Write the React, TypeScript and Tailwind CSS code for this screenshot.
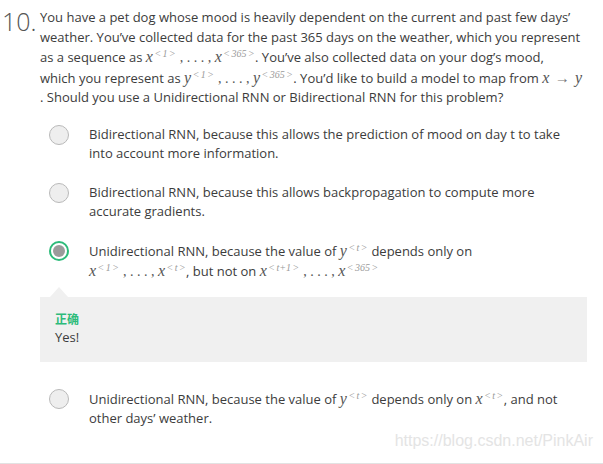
import React from "react";

function V({ c }: { c: string }) {
  return <span className="font-['Liberation_Serif'] text-[16px] italic text-[#555]">{c}</span>;
}

function Sup({ c }: { c: string }) {
  return (
    <sup className="ml-[2px] mr-[1px] font-['Liberation_Serif'] text-[10px] not-italic text-[#9a9a9a]">
      <span>&lt;</span>
      <span className="mx-[2px] italic">{c}</span>
      <span>&gt;</span>
    </sup>
  );
}

function Seq({ v, a, b }: { v: string; a: string; b: string }) {
  return (
    <span className="whitespace-nowrap">
      <V c={v} />
      <Sup c={a} />
      <span className="font-['Liberation_Serif'] text-[14px] text-[#555]"> , . . . , </span>
      <V c={v} />
      <Sup c={b} />
    </span>
  );
}

function Radio({ checked }: { checked?: boolean }) {
  if (checked) {
    return (
      <span className="flex h-[20px] w-[20px] shrink-0 items-center justify-center rounded-full border-[2.5px] border-[#2dbb7a] bg-white">
        <span className="block h-[12px] w-[12px] rounded-full bg-[#9b9b9b]" />
      </span>
    );
  }
  return <span className="block h-[20px] w-[20px] shrink-0 rounded-full border border-[#b9b9b9] bg-[#eeeeee]" />;
}

function Option({ checked, children }: { checked?: boolean; children: React.ReactNode }) {
  return (
    <div className="flex items-start pl-[49px]">
      <Radio checked={checked} />
      <div className="ml-[20px] w-[490px] leading-[19px]">{children}</div>
    </div>
  );
}

export default function App() {
  return (
    <div className="relative h-[464px] w-[603px] overflow-hidden border-b border-[#e2e2e2] bg-white font-['Open_Sans'] text-[13px] text-[#3c3c3c]">
      <div className="flex items-start pt-[8px]">
        <div className="w-[40px] pl-[2px] text-[25px] font-light leading-[26px] text-[#555]">10.</div>
        <p className="w-[553px] leading-[19.5px]">
          You have a pet dog whose mood is heavily dependent on the current and past few days’ weather. You’ve collected
          data for the past 365 days on the weather, which you represent as a sequence as <Seq v="x" a="1" b="365" />.
          You’ve also collected data on your dog’s mood,
          <br />
          which you represent as <Seq v="y" a="1" b="365" />. You’d like to build a model to map from{" "}
          <span className="whitespace-nowrap">
            <V c="x" /> <span className="mx-[2px] font-['Liberation_Serif'] text-[15px] text-[#777]">→</span> <V c="y" />
          </span>
          <br />. Should you use a Unidirectional RNN or Bidirectional RNN for this problem?
        </p>
      </div>

      <div className="mt-[17px] flex flex-col">
        <Option>
          Bidirectional RNN, because this allows the prediction of mood on day t to take into account more information.
        </Option>
        <div className="h-[20px]" />
        <Option>Bidirectional RNN, because this allows backpropagation to compute more accurate gradients.</Option>
        <div className="h-[20px]" />
        <Option checked>
          Unidirectional RNN, because the value of{" "}
          <span className="whitespace-nowrap">
            <V c="y" />
            <Sup c="t" />
          </span>{" "}
          depends only on
          <br />
          <Seq v="x" a="1" b="t" />, but not on <Seq v="x" a="t+1" b="365" />
        </Option>

        <div className="relative ml-[40px] mt-[16px] w-[547px] bg-[#f0f0f0] px-[15px] pb-[16px] pt-[13px]">
          <span className="absolute left-[10px] top-[-10px] h-0 w-0 border-x-[9px] border-b-[10px] border-x-transparent border-b-[#f0f0f0]" />
          <div className="font-['Noto_Sans_CJK_SC',sans-serif] text-[12px] font-bold leading-[18px] text-[#2dbb7a]">正确</div>
          <div className="leading-[18px]">Yes!</div>
        </div>

        <div className="mt-[27px]">
          <Option>
            Unidirectional RNN, because the value of{" "}
            <span className="whitespace-nowrap">
              <V c="y" />
              <Sup c="t" />
            </span>{" "}
            depends only on{" "}
            <span className="whitespace-nowrap">
              <V c="x" />
              <Sup c="t" />
            </span>
            , and not other days’ weather.
          </Option>
        </div>
      </div>

      <div className="absolute bottom-[10px] right-[10px] font-['Liberation_Sans'] text-[16px] text-[#e4e4e4]">
        https://blog.csdn.net/PinkAir
      </div>
    </div>
  );
}
